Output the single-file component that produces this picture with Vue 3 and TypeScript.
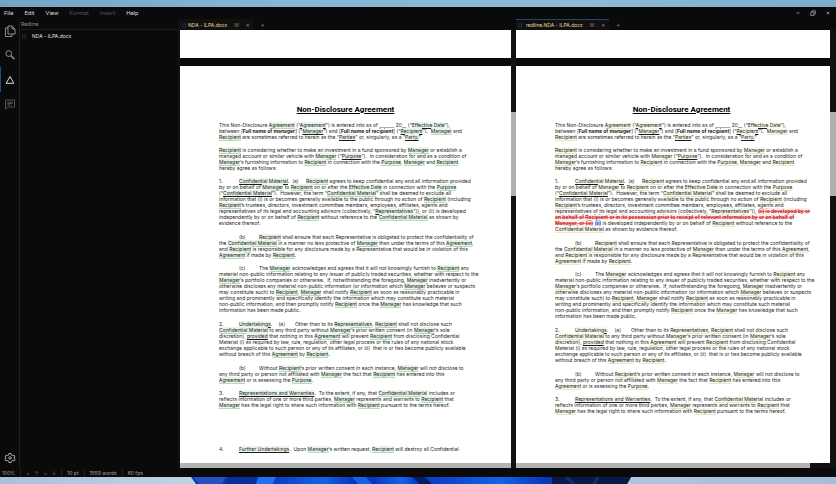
<script setup lang="ts">
type Kind = 'text' | 'term' | 'under' | 'bold' | 'deleted' | 'inserted'
interface Segment { kind: Kind; text: string }
interface Paragraph { lines: string[]; long?: boolean; last?: boolean }
interface Doc {
  id: string
  name: string
  marked: boolean
  active: boolean
  paragraphs: Paragraph[]
}

// Inline marks: ~underlined~  *bold*  ^deleted^  +inserted+
const marks: Record<string, Kind> = { '~': 'under', '*': 'bold', '^': 'deleted', '+': 'inserted' }
const termPattern = /(Confidential Material|Effective Date|Agreement|Managers?|Recipient|Purpose|Representatives)/

function parse(line: string): Segment[] {
  const out: Segment[] = []
  for (const part of line.split(/(~[^~]+~|\*[^*]+\*|\^[^^]+\^|\+[^+]+\+)/)) {
    if (!part) continue
    const kind = marks[part[0]]
    if (kind) {
      out.push({ kind, text: part.slice(1, -1) })
      continue
    }
    part.split(termPattern).forEach((text, i) => {
      if (text) out.push({ kind: i % 2 ? 'term' : 'text', text })
    })
  }
  return out
}

const opening: Paragraph[] = [
  {
    lines: [
      'This Non-Disclosure Agreement (“~Agreement~”) is entered into as of ______, 20__ (“~Effective Date~”),',
      'between [*Full name of manager*] (“~Manager~”) and [*Full name of recipient*] (“~Recipient~”).  Manager and',
      'Recipient are sometimes referred to herein as the “~Parties~” or, singularly, as a “~Party.~”',
    ],
  },
  {
    lines: [
      'Recipient is considering whether to make an investment in a fund sponsored by Manager or establish a',
      'managed account or similar vehicle with Manager (“~Purpose~”).  In consideration for and as a condition of',
      'Manager’s furnishing information to Recipient in connection with the Purpose, Manager and Recipient',
      'hereby agree as follows:',
    ],
  },
]

const confidentialStart = [
  '1.\t~Confidential Material~.  (a)\u2003\u2002Recipient agrees to keep confidential any and all information provided',
  'by or on behalf of Manager to Recipient on or after the Effective Date in connection with the Purpose',
  '(“~Confidential Material~”).  However, the term “Confidential Material” shall be deemed to exclude all',
  'information that (i) is or becomes generally available to the public through no action of Recipient (including',
  'Recipient’s trustees, directors, investment committee members, employees, affiliates, agents and',
]

const original: Paragraph = {
  long: true,
  lines: [
    ...confidentialStart,
    'representatives of its legal and accounting advisors (collectively, “~Representatives~”)), or (ii) is developed',
    'independently by or on behalf of Recipient without reference to the Confidential Material as shown by',
    'evidence thereof.',
  ],
}

const redlined: Paragraph = {
  long: true,
  lines: [
    ...confidentialStart,
    'representatives of its legal and accounting advisors (collectively, “~Representatives~”)), ^(ii) is developed by or^',
    '^on behalf of Recipient or in its possession prior to receipt of relevant information by or on behalf of^',
    '^Manager, or (iii)^ +(ii)+ is developed independently by or on behalf of Recipient without reference to the',
    'Confidential Material as shown by evidence thereof.',
  ],
}

const rest: Paragraph[] = [
  {
    lines: [
      '\t(b)\tRecipient shall ensure that each Representative is obligated to protect the confidentiality of',
      'the Confidential Material in a manner no less protective of Manager than under the terms of this Agreement,',
      'and Recipient is responsible for any disclosure made by a Representative that would be in violation of this',
      'Agreement if made by Recipient.',
    ],
  },
  {
    long: true,
    lines: [
      '\t(c)\tThe Manager acknowledges and agrees that it will not knowingly furnish to Recipient any',
      'material non-public information relating to any issuer of publicly traded securities, whether with respect to the',
      'Manager’s portfolio companies or otherwise.  If, notwithstanding the foregoing, Manager inadvertently or',
      'otherwise discloses any material non-public information (or information which Manager believes or suspects',
      'may constitute such) to Recipient, Manager shall notify Recipient as soon as reasonably practicable in',
      'writing and prominently and specifically identify the information which may constitute such material',
      'non-public information, and then promptly notify Recipient once the Manager has knowledge that such',
      'information has been made public.',
    ],
  },
  {
    long: true,
    lines: [
      '2.\t~Undertakings~.\u2002\u2002 (a)\u2003\u2002\u2002Other than to its Representatives, Recipient shall not disclose such',
      'Confidential Material to any third party without Manager’s prior written consent (in Manager’s sole',
      'discretion), ~provided~ that nothing in this Agreement will prevent Recipient from disclosing Confidential',
      'Material (i) as required by law, rule, regulation, other legal process or the rules of any national stock',
      'exchange applicable to such person or any of its affiliates, or (ii)  that is or has become publicly available',
      'without breach of this Agreement by Recipient.',
    ],
  },
  {
    lines: [
      '\t(b)\tWithout Recipient’s prior written consent in each instance, Manager will not disclose to',
      'any third party or person not affiliated with Manager the fact that Recipient has entered into this',
      'Agreement or is assessing the Purpose.',
    ],
  },
  {
    lines: [
      '3.\t~Representations and Warranties~.  To the extent, if any, that Confidential Material includes or',
      'reflects information of one or more third parties, Manager represents and warrants to Recipient that',
      'Manager has the legal right to share such information with Recipient pursuant to the terms hereof.',
    ],
  },
]

const closing: Paragraph = {
  last: true,
  lines: ['4.\t~Further Undertakings~.  Upon Manager’s written request, Recipient will destroy all Confidential'],
}

const docs: Doc[] = [
  { id: 'original', name: 'NDA - ILPA.docx', marked: true, active: false, paragraphs: [...opening, original, ...rest, closing] },
  { id: 'redline', name: 'redline.NDA - ILPA.docx', marked: true, active: true, paragraphs: [...opening, redlined, ...rest] },
]

const menus = [
  { label: 'File', off: false },
  { label: 'Edit', off: false },
  { label: 'View', off: false },
  { label: 'Format', off: true },
  { label: 'Insert', off: true },
  { label: 'Help', off: false },
]
</script>

<template>
  <div class="desktop">
    <div class="sky"></div>
    <div class="app">
      <header class="menubar">
        <nav class="menus" aria-label="Main menu">
          <button v-for="m in menus" :key="m.label" type="button" :disabled="m.off">{{ m.label }}</button>
        </nav>
        <div class="window-buttons">
          <button type="button" aria-label="Minimize"><svg viewBox="0 0 6 6"><path d="M1.5 3H4.5" /></svg></button>
          <button type="button" aria-label="Restore"><svg viewBox="0 0 6 6"><path d="M.8 2.2H4V5.4H.8ZM2 2.2V.8H5.3V4H4" /></svg></button>
          <button type="button" aria-label="Close"><svg viewBox="0 0 6 6"><path d="M1.7 1.7L4.3 4.3M4.3 1.7L1.7 4.3" /></svg></button>
        </div>
      </header>

      <div class="body">
        <nav class="activity" aria-label="Views">
          <button type="button" aria-label="Files" class="first">
            <svg viewBox="0 0 12 12"><path d="M4 1H8L11 4V9H4ZM8 1V4H11M4 3H1.5V11.5H8V9" /></svg>
          </button>
          <button type="button" aria-label="Search">
            <svg viewBox="0 0 12 12"><circle cx="4.8" cy="4.6" r="2.9" /><path d="M7 6.8L10.5 10.3" stroke-width="1.3" /></svg>
          </button>
          <button type="button" aria-label="Redline" class="current">
            <svg viewBox="0 0 12 12"><path d="M6 2.5L9.8 9.3H2.2Z" /></svg>
          </button>
          <button type="button" aria-label="Comments" class="dim">
            <svg viewBox="0 0 12 12"><path d="M1.5 2H10.5V9H4L1.5 11ZM3.3 4.2H8.8M3.3 5.6H8.8M3.3 7H6.8" /></svg>
          </button>
          <button type="button" aria-label="Settings" class="bottom">
            <svg viewBox="0 0 12 12"><path d="M5 1.5H7L7.4 3L8.5 3.6L10 3.2L11 5L9.9 6L11 7.2L10 9L8.5 8.5L7.4 9.2L7 10.6H5L4.6 9.2L3.5 8.5L2 9L1 7.2L2.1 6L1 5L2 3.2L3.5 3.6L4.6 3Z" /><circle cx="6" cy="6" r="1.2" /></svg>
          </button>
        </nav>

        <aside class="panel">
          <h2>Redline</h2>
          <a href="#original"><svg class="file" viewBox="0 0 5 5"><rect x=".5" y=".5" width="4" height="4" /></svg>NDA - ILPA.docx</a>
        </aside>

        <main class="panes">
          <section v-for="d in docs" :id="d.id" :key="d.id" class="pane" :class="d.id">
            <div class="tabs">
              <div class="tab" :class="{ active: d.active }">
                <svg class="file" viewBox="0 0 5 5"><rect x=".5" y=".5" width="4" height="4" /></svg>
                <span class="name">{{ d.name }}</span>
                <span v-if="d.marked" class="state">M</span>
                <button type="button" aria-label="Close tab">×</button>
              </div>
              <button type="button" class="add" aria-label="New tab">+</button>
            </div>
            <div class="view">
              <div class="sheets">
                <div class="sheet previous"></div>
                <article class="sheet">
                  <h1>Non-Disclosure Agreement</h1>
                  <p v-for="(p, i) in d.paragraphs" :key="i" :class="{ long: p.long, last: p.last }">
                    <span v-for="(line, j) in p.lines" :key="j" class="line"><span v-for="(s, k) in parse(line)" :key="k" :class="s.kind">{{ s.text }}</span></span>
                  </p>
                </article>
              </div>
              <div class="track"><div class="thumb"></div></div>
            </div>
            <div class="bottom-track"><div class="thumb"></div></div>
          </section>
        </main>
      </div>

      <footer class="status">
        <span class="zoom">100%</span>
        <span class="marks"><i>×</i><i>↑</i><i>×</i><i>↓</i></span>
        <span>10 pt</span>
        <span>1559 words</span>
        <span>60 fps</span>
      </footer>
    </div>
    <svg class="wallpaper" viewBox="0 0 836 7" preserveAspectRatio="none" aria-hidden="true">
      <defs>
        <linearGradient id="haze"><stop offset="0" stop-color="#a9c2dc" /><stop offset=".25" stop-color="#c2d2e6" /><stop offset="1" stop-color="#a4bfda" /></linearGradient>
        <linearGradient id="petal"><stop offset="0" stop-color="#0a3cc0" /><stop offset=".6" stop-color="#1462ea" /><stop offset="1" stop-color="#0634b0" /></linearGradient>
      </defs>
      <rect width="836" height="7" fill="url(#haze)" />
      <path d="M191 0H631L627 7H196Z" fill="#0738b0" />
      <path d="M193 0H226L222 7H199Z" fill="#2450c4" />
      <path d="M228 0H258L255 7H226Z" fill="#0a2f9c" />
      <path d="M258 0H276L273 7H256Z" fill="#1c72f0" />
      <path d="M276 0H350L356 7H273Z" fill="url(#petal)" />
      <path d="M352 0H366L372 7H358Z" fill="#1660ea" />
      <path d="M374 0H412L420 7H378Z" fill="url(#petal)" />
      <path d="M412 0H424Q430 3 431 7H420Z" fill="#031a64" />
      <path d="M425 0H550L548 7H432Z" fill="url(#petal)" />
      <path d="M552 0H631L627 7H552Z" fill="#071a48" />
      <path d="M566 0L574 7M598 0L594 7" stroke="#12306e" stroke-width="3" />
    </svg>
  </div>
</template>

<style>
body { background: #0a0a0a; }
</style>

<style scoped>
* { box-sizing: border-box; }
.desktop { display: flex; flex-direction: column; height: 100vh; font-family: Inter, "Liberation Sans", sans-serif; font-size: 5px; line-height: 8px; color: #b4b4b4; }
.sky { height: 7px; flex: none; background: linear-gradient(90deg, #74a3c4, #86b4d4 30%, #8fbad8 70%, #7dabcc); }
.wallpaper { display: block; width: 100%; height: 7px; flex: none; stroke: none; }
.app { flex: 1; min-height: 0; display: flex; flex-direction: column; background: #0a0a0a; }
button { padding: 0; border: 0; background: none; font: inherit; color: inherit; }
a { color: inherit; text-decoration: none; }
.app svg { fill: none; stroke: currentColor; }

.menubar { height: 12px; flex: none; display: flex; justify-content: space-between; align-items: center; padding: 0 5px 0 4px; }
.menus { display: flex; gap: 11px; color: #d8d8d8; font-family: Roboto, sans-serif; font-size: 6px; }
.menus button:disabled { color: #545454; }
.window-buttons { display: flex; gap: 9px; }
.window-buttons svg { display: block; width: 6px; height: 6px; stroke-width: .7; }

.body { flex: 1; min-height: 0; display: flex; }
.activity { width: 20px; flex: none; display: flex; flex-direction: column; border-right: 1px solid #1e1e1e; }
.activity button { height: 25px; display: flex; align-items: center; justify-content: center; color: #9a9a9a; border-left: 1px solid transparent; }
.activity button.first { height: 23px; }
.activity button.current { color: #f0f0f0; border-left-color: #234a80; }
.activity button.dim { height: 24px; color: #5c5c5c; }
.activity button.bottom { margin-top: auto; height: 20px; color: #c0c0c0; }
.activity svg { width: 12px; height: 12px; stroke-width: .9; }

.panel { width: 160px; flex: none; border-right: 2px solid #121212; }
.panel h2 { margin: 0; padding: 1px 1px 0; height: 11px; font-size: 5px; font-weight: 400; color: #959595; border-bottom: 1px solid #1c1c1c; }
.panel a { display: flex; align-items: center; gap: 6px; height: 12px; padding: 0 2px; color: #e0e0e0; }
.file { width: 4px; height: 5px; color: #24344c; }

.panes { flex: 1; min-width: 0; display: flex; }
.pane { flex: 336 1 0; min-width: 0; display: flex; flex-direction: column; }
.pane.redline { flex-grow: 320; }
.tabs { height: 11px; flex: none; display: flex; align-items: center; gap: 7px; }
.tab { height: 11px; display: flex; align-items: center; gap: 7px; padding: 0 4px 0 2px; border-top: 1px solid transparent; background: #101010; }
.tab.active { border-top-color: #24466f; }
.tab .file { margin-right: -5px; }
.redline .file { margin-right: -3px; }
.name { color: #ecd998; white-space: nowrap; }
.state { color: #857d62; }
.tab button, .add { font-size: 6px; color: #909090; }

.view { flex: 1; min-height: 0; display: flex; overflow: hidden; }
.sheets { flex: 1; min-width: 0; overflow: hidden; display: flex; flex-direction: column; gap: 8px; }
.sheet { flex: 1; background: #fff; color: #1c1c1c; padding: 38px 39px 0; width: 331px; font-size: 5px; line-height: 6px; }
.sheet.previous { flex: none; height: 28px; padding: 0; }
.sheet h1 { margin: 0 0 6px; font-family: Roboto, Arial, sans-serif; font-size: 8px; line-height: 12px; text-align: center; text-decoration: underline; color: #000; }
.sheet p { margin: 0 0 7px; }
.sheet p.long { margin-bottom: 8px; }
.sheet p.last { margin-top: 38px; }
.line { display: block; white-space: pre; tab-size: 20px; }
.under { text-decoration: underline; }
.bold { font-weight: 700; }
.term, .under { background: #e9f5ea; }
.term { border-bottom: 1px solid #b4dcb8; }
.redline .term, .redline .under { background: #f9f9ee; }
.redline .term { border-bottom-color: #e8e8c4; }
.sheet .deleted { color: #c81e1e; font-weight: 700; text-decoration: line-through rgba(214, 60, 60, .55); background: #fdeeee; }
.sheet .inserted { color: #2040d0; font-weight: 700; text-decoration: underline; background: #e4e9ff; }

.track { width: 5px; flex: none; background: #111; padding-top: 82px; }
.redline .track { width: 6px; }
.track .thumb { height: 84px; background: #b0b0b0; }
.bottom-track { height: 5px; flex: none; background: #111; padding-right: 5px; }
.bottom-track .thumb { height: 5px; background: #b4b4b4; }
.redline .bottom-track { padding-right: 26px; }

.status { height: 9px; flex: none; display: flex; align-items: center; color: #a0a0a0; }
.status > span { padding: 0 5px; border-right: 1px solid #222; }
.status > span:last-child { border-right: 0; }
.status > .zoom { padding: 0 5px 0 2px; }
.status .marks { display: flex; gap: 5px; color: #666; }
.status i { font-style: normal; }
</style>
